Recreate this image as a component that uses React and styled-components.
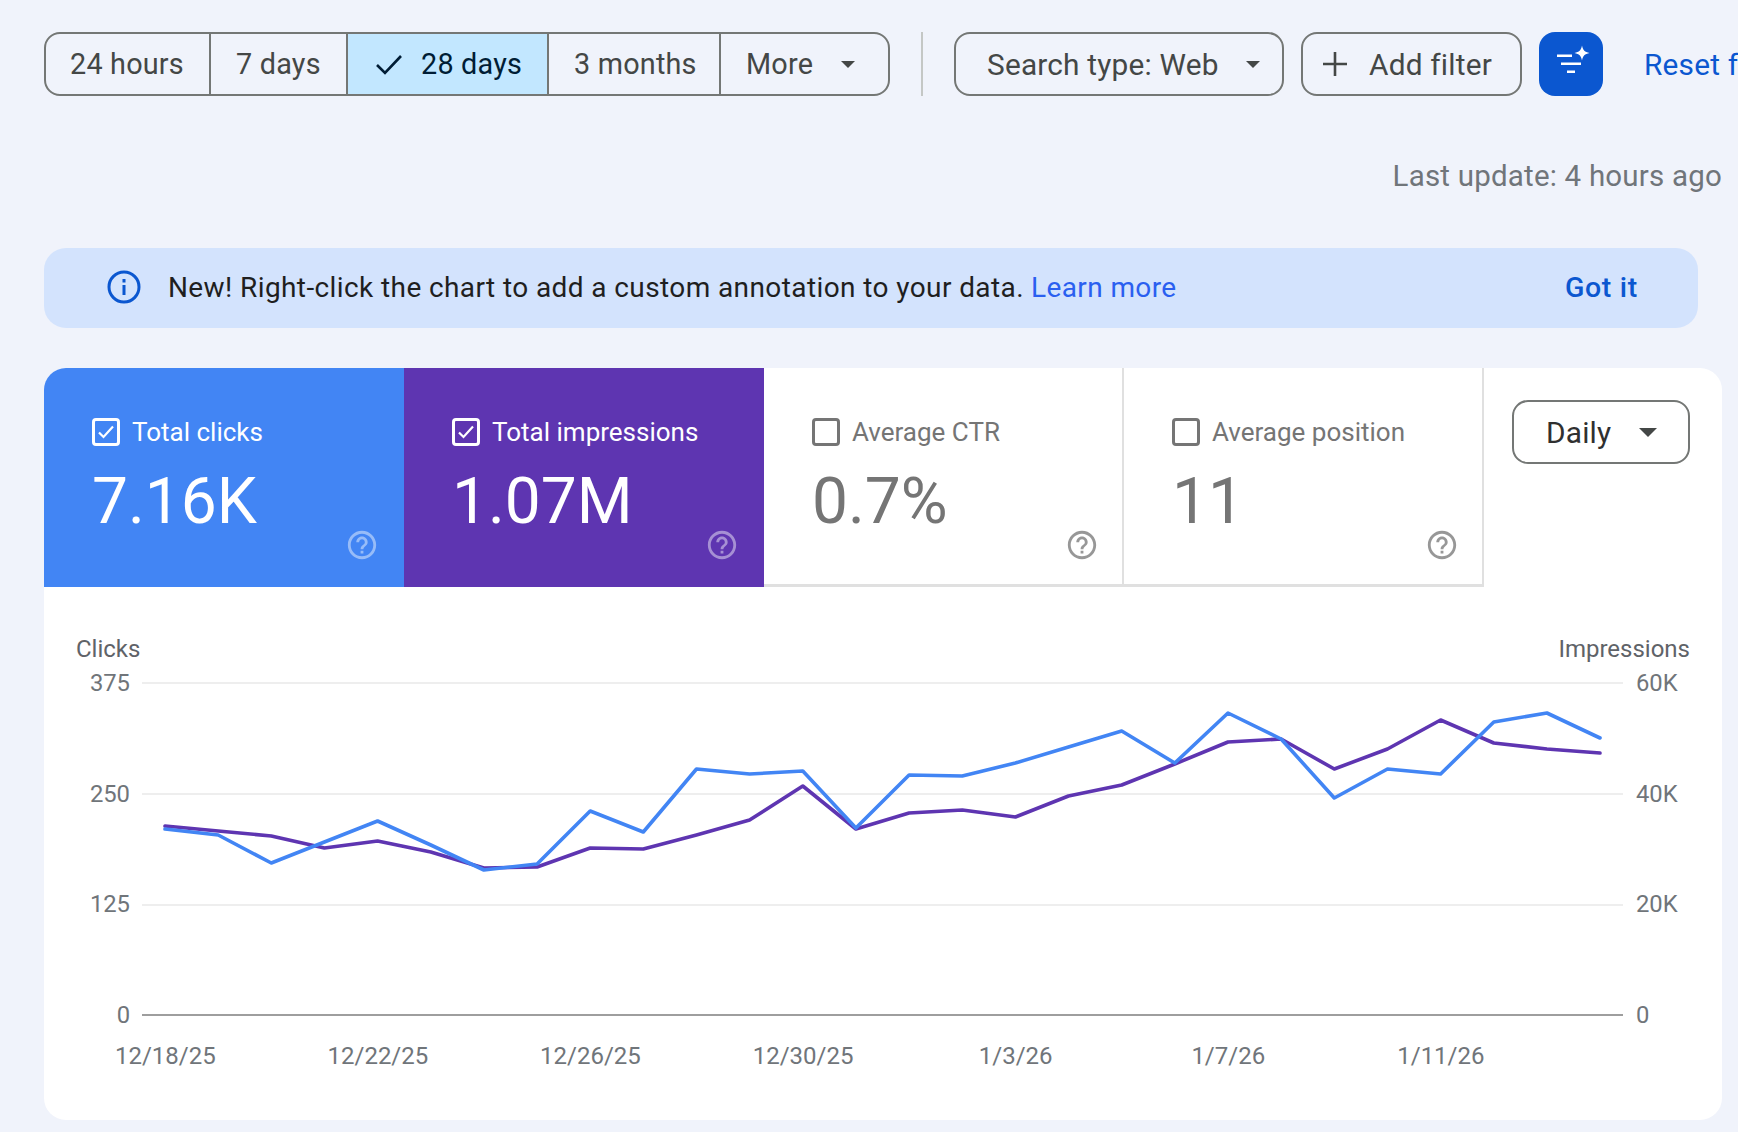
import React from "react";
import styled, { createGlobalStyle } from "styled-components";

const GlobalStyle = createGlobalStyle`
  html, body {
    margin: 0;
    padding: 0;
    background: #f0f3fb;
    font-family: Roboto, "Noto Sans", sans-serif;
  }
`;

const Page = styled.div`
  box-sizing: border-box;
  width: 1738px;
  height: 1132px;
  overflow: hidden;
  padding: 32px 16px 0 44px;
  background: #f0f3fb;
`;

const Toolbar = styled.div`
  display: flex;
  align-items: center;
  height: 64px;
  white-space: nowrap;
`;

const SegmentGroup = styled.div`
  display: flex;
  flex: none;
  height: 64px;
  box-sizing: border-box;
  border: 2px solid #747775;
  border-radius: 16px;
  overflow: hidden;
`;

const Segment = styled.div`
  display: flex;
  align-items: center;
  flex: none;
  box-sizing: border-box;
  width: ${(p) => p.$width}px;
  padding-left: ${(p) => p.$pad || 25}px;
  font-size: 28.8px;
  letter-spacing: 0.2px;
  color: ${(p) => (p.$active ? "#001d35" : "#444746")};
  background: ${(p) => (p.$active ? "#c2e7ff" : "transparent")};
  border-left: ${(p) => (p.$first ? "none" : "2px solid #747775")};
`;

const Divider = styled.div`
  width: 2px;
  height: 64px;
  flex: none;
  margin: 0 31px;
  background: #c4c7c5;
`;

const OutlineButton = styled.div`
  display: flex;
  align-items: center;
  flex: none;
  box-sizing: border-box;
  width: ${(p) => p.$width}px;
  height: 64px;
  margin-right: ${(p) => p.$gap || 0}px;
  padding-left: ${(p) => p.$pad}px;
  font-size: 29.8px;
  letter-spacing: 0.2px;
  color: ${(p) => (p.$dark ? "#303030" : "#444746")};
  border: 2px solid #747775;
  border-radius: 16px;
`;

const Caret = styled.svg`
  width: ${(p) => p.$w}px;
  height: ${(p) => p.$w / 2}px;
  margin-left: ${(p) => p.$gap}px;
  fill: #444746;
  flex: none;
`;

const GlyphIcon = styled.svg`
  flex: none;
  width: ${(p) => p.$size}px;
  height: ${(p) => p.$size}px;
  margin-right: ${(p) => p.$gap || 0}px;
`;

const SparkButton = styled.div`
  display: flex;
  align-items: center;
  justify-content: center;
  width: 64px;
  height: 64px;
  flex: none;
  border-radius: 16px;
  background: #0b57d0;
`;

const ResetLink = styled.span`
  margin-left: 41px;
  font-size: 29.8px;
  letter-spacing: 0.2px;
  color: #0b57d0;
`;

const LastUpdate = styled.div`
  margin-top: 63px;
  height: 34px;
  line-height: 34px;
  text-align: right;
  font-size: 29.5px;
  letter-spacing: 0.2px;
  color: #70757a;
`;

const Banner = styled.div`
  display: flex;
  align-items: center;
  box-sizing: border-box;
  height: 80px;
  margin: 55px 24px 0 0;
  padding: 0 60px 2px 63px;
  border-radius: 22px;
  background: #d3e3fd;
  font-size: 28px;
  letter-spacing: 0.4px;
  color: #1f1f1f;
  white-space: nowrap;
`;

const BannerLink = styled.span`
  margin-left: 7px;
  color: #2a5ff0;
`;

const BannerAction = styled.span`
  margin-left: auto;
  font-weight: 500;
  font-size: 28.5px;
  letter-spacing: 0.7px;
  color: #0b57d0;
`;

const Card = styled.div`
  box-sizing: border-box;
  height: 752px;
  margin-top: 40px;
  border-radius: 22px;
  background: #fff;
  overflow: hidden;
`;

const TabRow = styled.div`
  display: flex;
  align-items: flex-start;
`;

const Tab = styled.div`
  display: flex;
  flex-direction: column;
  flex: none;
  box-sizing: border-box;
  width: 360px;
  height: 219px;
  padding: 50px ${(p) => (p.$bg ? 25 : 23)}px 0 48px;
  background: ${(p) => p.$bg || "#fff"};
  color: ${(p) => (p.$bg ? "#fff" : "#757575")};
  border-right: ${(p) => (p.$bg ? "none" : "2px solid #e0e0e0")};
  border-bottom: ${(p) => (p.$bg ? "none" : "3px solid #e0e0e0")};
`;

const TabHead = styled.div`
  display: flex;
  align-items: center;
  height: 28px;
  font-size: 26px;
`;

const CheckBox = styled.div`
  display: flex;
  align-items: center;
  justify-content: center;
  box-sizing: border-box;
  width: 28px;
  height: 28px;
  margin-right: 12px;
  border: 3px solid currentColor;
  border-radius: 4px;
`;

const TabValue = styled.div`
  margin-top: 21px;
  height: 70px;
  line-height: 70px;
  font-size: 64px;
`;

const HelpIcon = styled.svg`
  align-self: flex-end;
  width: 34px;
  height: 34px;
  margin-top: -9px;
  fill: currentColor;
  opacity: ${(p) => (p.$onColor ? 0.45 : 0.75)};
`;

const IntervalWrap = styled.div`
  flex: 1;
  display: flex;
  justify-content: flex-end;
  padding: 32px 32px 0 0;
`;

const ChartArea = styled.div`
  padding-top: 48px;
`;

const AxisTitles = styled.div`
  display: flex;
  justify-content: space-between;
  height: 28px;
  line-height: 28px;
  padding: 0 32px;
  font-size: 24px;
  color: #5f6368;
`;

const PlotRow = styled.div`
  display: flex;
  margin-top: 19px;
`;

const YAxis = styled.div`
  display: flex;
  flex-direction: column;
  justify-content: space-between;
  flex: none;
  box-sizing: border-box;
  width: ${(p) => p.$width}px;
  height: 333px;
  text-align: ${(p) => p.$align};
  padding: ${(p) => (p.$align === "right" ? "1px 12px 0 0" : "1px 0 0 13px")};
  font-size: 23.8px;
  color: #70757a;
`;

const Tick = styled.div`
  height: 0;
  line-height: 0;
`;

const Plot = styled.svg`
  display: block;
  flex: none;
  width: 1481px;
  height: 333px;
  overflow: visible;
`;

const XAxis = styled.div`
  display: flex;
  margin: 27px 0 0 15px;
`;

const XTick = styled.div`
  width: 212.6px;
  flex: none;
  text-align: center;
  height: 28px;
  line-height: 28px;
  font-size: 24px;
  color: #70757a;
`;

const blueLine = [829, 835, 863, 842, 821, 845, 870, 864, 811, 832, 769, 774, 771, 828, 775, 776, 763, 747, 731, 763, 713, 739, 798, 769, 774, 722, 713, 738];
const purpleLine = [826, 831, 836, 848, 841, 852, 868, 867, 848, 849, 835, 820, 786, 829, 813, 810, 817, 796, 785, 764, 742, 739, 769, 749, 720, 743, 749, 753];

const toPoints = (values) =>
  values.map((y, i) => `${(23 + i * 53.15).toFixed(1)},${y - 682}`).join(" ");

const dates = ["12/18/25", "12/22/25", "12/26/25", "12/30/25", "1/3/26", "1/7/26", "1/11/26"];
const clicksTicks = ["375", "250", "125", "0"];
const impressionTicks = ["60K", "40K", "20K", "0"];

const tabs = [
  { label: "Total clicks", value: "7.16K", bg: "#4285f4", checked: true },
  { label: "Total impressions", value: "1.07M", bg: "#5e35b1", checked: true },
  { label: "Average CTR", value: "0.7%" },
  { label: "Average position", value: "11" },
];

const ArrowDown = ({ gap, w = 14 }) => (
  <Caret $gap={gap} $w={w} viewBox="0 0 14 7">
    <path d="M0 0h14L7 7z" />
  </Caret>
);

const HELP_PATH =
  "M11 18h2v-2h-2v2zm1-16C6.48 2 2 6.48 2 12s4.48 10 10 10 10-4.48 10-10S17.52 2 12 2zm0 18c-4.41 0-8-3.59-8-8s3.59-8 8-8 8 3.59 8 8-3.59 8-8 8zm0-14c-2.21 0-4 1.79-4 4h2c0-1.1.9-2 2-2s2 .9 2 2c0 2-3 1.75-3 5h2c0-2.25 3-2.5 3-5 0-2.21-1.79-4-4-4z";

export default function App() {
  return (
    <Page>
      <GlobalStyle />
      <Toolbar>
        <SegmentGroup>
          <Segment $first $width={163} $pad={24}>24 hours</Segment>
          <Segment $width={137}>7 days</Segment>
          <Segment $active $width={201} $pad={26}>
            <GlyphIcon $size={30} $gap={17} viewBox="0 0 30 30" fill="none" stroke="#001d35" strokeWidth="2.6">
              <path d="M3 16l8 8L27 7" />
            </GlyphIcon>
            28 days
          </Segment>
          <Segment $width={172}>3 months</Segment>
          <Segment $width={169}>
            More
            <ArrowDown gap={28} />
          </Segment>
        </SegmentGroup>
        <Divider />
        <OutlineButton $width={330} $pad={31} $gap={17}>
          Search type: Web
          <ArrowDown gap={27} />
        </OutlineButton>
        <OutlineButton $width={221} $pad={19} $gap={17}>
          <GlyphIcon $size={26} $gap={21} viewBox="0 0 26 26" fill="none" stroke="#444746" strokeWidth="2.6">
            <path d="M13 1v24M1 13h24" />
          </GlyphIcon>
          Add filter
        </OutlineButton>
        <SparkButton>
          <GlyphIcon $size={64} viewBox="0 0 64 64" fill="#fff">
            <path d="M18 22.500h15v2.600H18zM22 30.500h20v2.600H22zM28 38.500h8v2.600H28z" />
            <path d="M43 13.500c1 4.800 2.700 6.500 7.500 7.500-4.800 1-6.500 2.700-7.500 7.500-1-4.800-2.700-6.500-7.500-7.500 4.800-1 6.500-2.700 7.500-7.500z" />
          </GlyphIcon>
        </SparkButton>
        <ResetLink>Reset filters</ResetLink>
      </Toolbar>

      <LastUpdate>Last update: 4 hours ago</LastUpdate>

      <Banner>
        <GlyphIcon $size={34} $gap={27} viewBox="0 0 34 34" fill="none" stroke="#0b57d0" strokeWidth="3">
          <circle cx="17" cy="17" r="15" />
          <path d="M17 15v10M17 9v3.400" />
        </GlyphIcon>
        New! Right-click the chart to add a custom annotation to your data.
        <BannerLink>Learn more</BannerLink>
        <BannerAction>Got it</BannerAction>
      </Banner>

      <Card>
        <TabRow>
          {tabs.map((tab) => (
            <Tab key={tab.label} $bg={tab.bg}>
              <TabHead>
                <CheckBox>
                  {tab.checked && (
                    <svg width="20" height="20" viewBox="0 0 20 20" fill="none" stroke="#fff" strokeWidth="2.200">
                      <path d="M3 10.500l4.500 4.500L17 4.500" />
                    </svg>
                  )}
                </CheckBox>
                {tab.label}
              </TabHead>
              <TabValue>{tab.value}</TabValue>
              <HelpIcon $onColor={!!tab.bg} viewBox="0 0 24 24">
                <path d={HELP_PATH} />
              </HelpIcon>
            </Tab>
          ))}
          <IntervalWrap>
            <OutlineButton $width={178} $pad={32} $dark>
              Daily
              <ArrowDown gap={28} w={18} />
            </OutlineButton>
          </IntervalWrap>
        </TabRow>

        <ChartArea>
          <AxisTitles>
            <span>Clicks</span>
            <span>Impressions</span>
          </AxisTitles>
          <PlotRow>
            <YAxis $width={98} $align="right">
              {clicksTicks.map((t) => (
                <Tick key={t}>{t}</Tick>
              ))}
            </YAxis>
            <Plot viewBox="0 0 1481 333">
              {[0, 111, 222].map((y) => (
                <line key={y} x1="0" x2="1481" y1={y + 1} y2={y + 1} stroke="#eeeeee" strokeWidth="2" />
              ))}
              <line x1="0" x2="1481" y1="333" y2="333" stroke="#9e9e9e" strokeWidth="2" />
              <polyline points={toPoints(purpleLine)} fill="none" stroke="#5e35b1" strokeWidth="3.6" strokeLinejoin="round" strokeLinecap="round" />
              <polyline points={toPoints(blueLine)} fill="none" stroke="#4285f4" strokeWidth="3.6" strokeLinejoin="round" strokeLinecap="round" />
            </Plot>
            <YAxis $width={80} $align="left">
              {impressionTicks.map((t) => (
                <Tick key={t}>{t}</Tick>
              ))}
            </YAxis>
          </PlotRow>
          <XAxis>
            {dates.map((d) => (
              <XTick key={d}>{d}</XTick>
            ))}
          </XAxis>
        </ChartArea>
      </Card>
    </Page>
  );
}
